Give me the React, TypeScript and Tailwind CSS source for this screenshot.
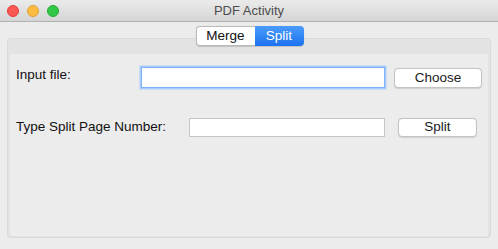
import React from 'react'

const FONT = '[font-family:"Liberation_Sans",Arial,sans-serif]'

function TrafficLights() {
  return (
    <div className="flex items-center gap-[8px] pl-[7px]">
      <span className="w-[12px] h-[12px] rounded-full bg-[#fc5753] border border-[#df3e3a]" />
      <span className="w-[12px] h-[12px] rounded-full bg-[#fdbc40] border border-[#de9f34]" />
      <span className="w-[12px] h-[12px] rounded-full bg-[#33c748] border border-[#27aa35]" />
    </div>
  )
}

function Button({ label, className }: { label: string; className: string }) {
  return (
    <button
      className={`bg-white border border-[#c3c3c3] rounded-[4px] shadow-[0_0.5px_1px_rgba(0,0,0,0.12)] text-[13.5px] text-[#1a1a1a] leading-none flex items-center justify-center ${className}`}
    >
      {label}
    </button>
  )
}

export default function App() {
  return (
    <div className={`w-[498px] h-[249px] bg-[#ececec] flex flex-col overflow-hidden ${FONT}`}>
      {/* Title bar */}
      <div className="relative h-[22px] flex items-center bg-gradient-to-b from-[#ebebeb] to-[#d5d5d5] border-b border-[#b1b1b1]">
        <TrafficLights />
        <div className="absolute inset-0 flex items-center justify-center text-[13px] text-[#4d4d4d]">PDF Activity</div>
      </div>

      {/* Segmented tabs */}
      <div className="relative z-10 flex justify-center mt-[4px] pl-[1px]">
        <div className="flex h-[20px] rounded-[4px] shadow-[0_0.5px_1px_rgba(0,0,0,0.15)]">
          <div className="w-[59px] flex items-center justify-center bg-white border border-[#b9b9b9] border-r-0 rounded-l-[4px] text-[13.5px] text-[#111]">
            Merge
          </div>
          <div className="w-[49px] flex items-center justify-center bg-gradient-to-b from-[#4b9bfb] to-[#1c72ef] rounded-r-[4px] text-[13.5px] text-white">
            Split
          </div>
        </div>
      </div>

      {/* Panel */}
      <div className="mt-[-8px] mx-[7px] w-[484px] h-[200px] bg-[#e3e3e3] border border-[#dadada] rounded-[4px] px-[2px] pt-[15px] pb-[1px] flex">
        <div className="flex-1 bg-[#ececec] flex flex-col">
          <div className="flex items-center mt-[13px] h-[21px]">
            <span className="ml-[6px] w-[125px] text-[13.5px] text-[#111] pb-[4px]">Input file:</span>
            <div className="w-[244px] h-[21px] bg-white border border-[#7fb2f4] shadow-[0_0_0_1.5px_#a9cdf8]" />
            <Button label="Choose" className="ml-[9px] w-[88px] h-[20px]" />
          </div>
          <div className="flex items-center mt-[29px] h-[20px]">
            <span className="ml-[6px] w-[173px] text-[13.5px] text-[#111]">Type Split Page Number:</span>
            <div className="w-[196px] h-[19px] bg-white border border-[#c6c6c6]" />
            <Button label="Split" className="ml-[13px] w-[79px] h-[19px]" />
          </div>
        </div>
      </div>
    </div>
  )
}
